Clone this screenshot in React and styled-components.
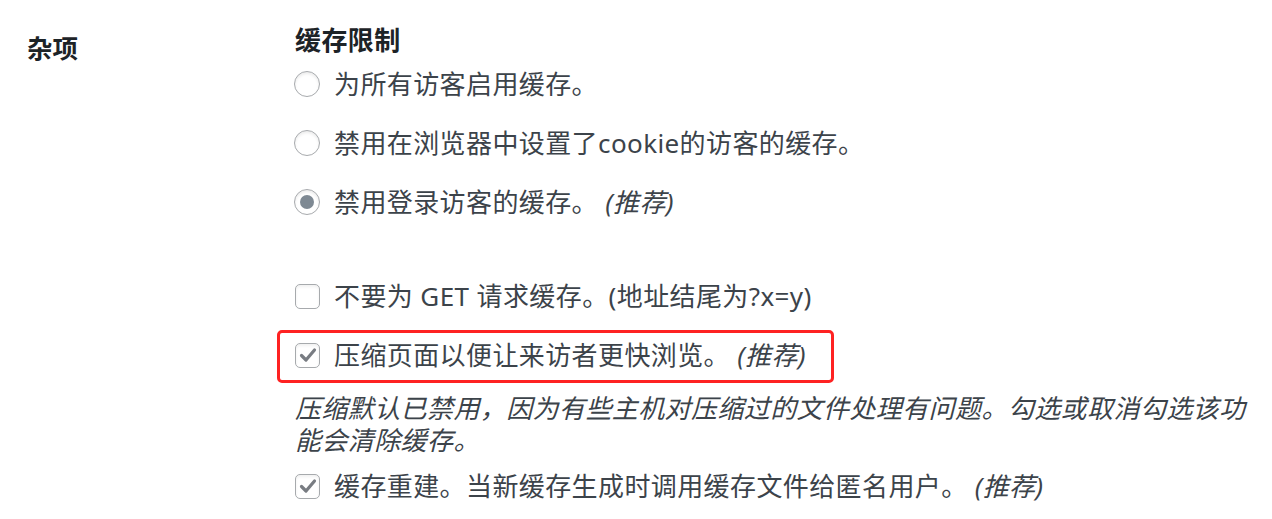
import React from "react";
import styled, { createGlobalStyle } from "styled-components";

const GlobalStyle = createGlobalStyle`
  html, body {
    margin: 0;
    padding: 0;
    background: #ffffff;
  }
  body {
    font-family: "Noto Sans", "Noto Sans CJK SC", sans-serif;
    color: #3c434a;
  }
`;

const FormTable = styled.div`
  display: grid;
  grid-template-columns: 268px 1fr;
  padding: 0 0 0 27px;
  width: 1272px;
  box-sizing: border-box;
`;

const RowHeader = styled.div`
  padding-top: 31px;
  font-size: 25.5px;
  line-height: 34px;
  font-weight: 700;
  color: #1d2327;
`;

const Cell = styled.div`
  padding-top: 23px;
  display: flex;
  flex-direction: column;
  font-size: 26px;
  line-height: 34px;
  letter-spacing: 0.4px;
`;

const Legend = styled.div`
  font-weight: 700;
  color: #1d2327;
  height: 34px;
`;

const Group = styled.div`
  display: flex;
  flex-direction: column;
  gap: 25px;
  margin-top: ${(p) => p.$top || 0}px;
`;

const Option = styled.label`
  position: relative;
  display: flex;
  align-items: center;
  align-self: flex-start;
  height: 34px;
  gap: 14px;
  white-space: nowrap;
  margin-top: ${(p) => p.$top || 0}px;
`;

const RadioCircle = styled.span`
  flex: none;
  width: 26px;
  height: 26px;
  margin-left: -1px;
  box-sizing: border-box;
  border-radius: 50%;
  border: 1.5px solid #a7aaad;
  background: #ffffff;
  box-shadow: inset 0 2px 3px rgba(0, 0, 0, 0.08);
  display: flex;
  align-items: center;
  justify-content: center;

  &::after {
    content: "";
    display: ${(p) => (p.$checked ? "block" : "none")};
    width: 14px;
    height: 14px;
    border-radius: 50%;
    background: #7e8993;
  }
`;

const CheckBox = styled.span`
  flex: none;
  width: 25px;
  height: 25px;
  box-sizing: border-box;
  border-radius: 5px;
  border: 1.5px solid #a7aaad;
  background: #ffffff;
  box-shadow: inset 0 2px 3px rgba(0, 0, 0, 0.06);
  display: flex;
  align-items: center;
  justify-content: center;
`;

const Em = styled.em`
  font-style: italic;
`;

const Highlight = styled.span`
  position: absolute;
  left: -18px;
  right: -28px;
  top: -8px;
  bottom: -11px;
  border: 3.5px solid #fe2222;
  border-radius: 5px;
  pointer-events: none;
`;

const Description = styled.p`
  margin: 20px 0 0 0;
  font-style: italic;
  font-size: 26px;
  line-height: 32px;
  color: #3c434a;
  max-width: 958px;
`;

function Radio({ checked, children, top }) {
  return (
    <Option $top={top}>
      <RadioCircle $checked={checked} />
      <span>{children}</span>
    </Option>
  );
}

function Check({ checked, children, top, highlight }) {
  return (
    <Option $top={top}>
      <CheckBox>
        {checked && (
          <svg width="22" height="22" viewBox="0 0 22 22">
            <polyline
              points="4.5,11.5 9,16 17.5,6"
              fill="none"
              stroke="#787c82"
              strokeWidth="3.2"
              strokeLinecap="round"
              strokeLinejoin="round"
            />
          </svg>
        )}
      </CheckBox>
      <span>{children}</span>
      {highlight && <Highlight />}
    </Option>
  );
}

export default function App() {
  return (
    <>
      <GlobalStyle />
      <FormTable>
        <RowHeader>杂项</RowHeader>
        <Cell>
          <Legend>缓存限制</Legend>
          <Group $top={10}>
            <Radio>为所有访客启用缓存。</Radio>
            <Radio>禁用在浏览器中设置了cookie的访客的缓存。</Radio>
            <Radio checked>
              禁用登录访客的缓存。 <Em>(推荐)</Em>
            </Radio>
          </Group>
          <Check top={60}>不要为 GET 请求缓存。(地址结尾为?x=y)</Check>
          <Check checked top={25} highlight>
            压缩页面以便让来访者更快浏览。 <Em>(推荐)</Em>
          </Check>
          <Description>
            压缩默认已禁用，因为有些主机对压缩过的文件处理有问题。勾选或取消勾选该功能会清除缓存。
          </Description>
          <Check checked top={13}>
            缓存重建。当新缓存生成时调用缓存文件给匿名用户。 <Em>(推荐)</Em>
          </Check>
        </Cell>
      </FormTable>
    </>
  );
}
